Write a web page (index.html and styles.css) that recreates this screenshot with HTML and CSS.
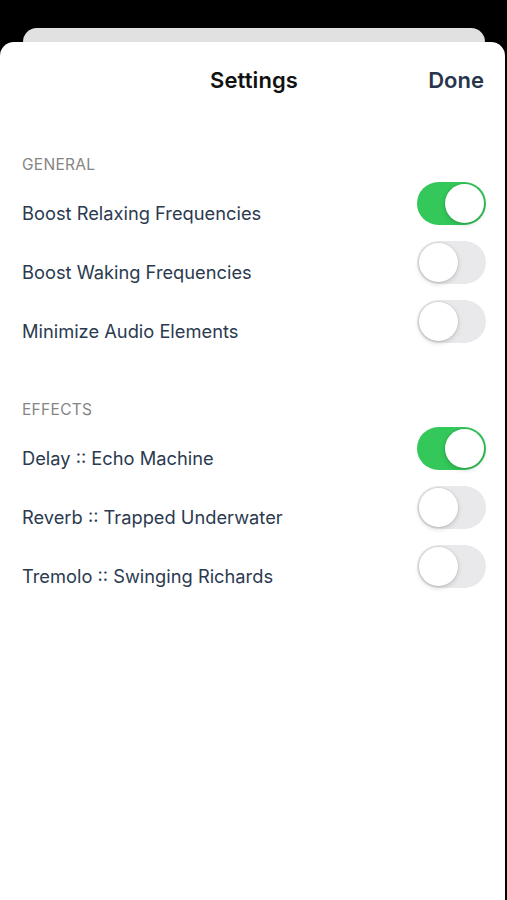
FILE: index.html
```html
<!DOCTYPE html>
<html lang="en">

<head>
    <meta charset="UTF-8">
    <title>Settings</title>
    <meta name="viewport" content="width=device-width,initial-scale=1">
    <link rel="stylesheet" href="styles.css">
</head>

<body>
    <div class="back-card"></div>
    <div class="sheet">
        <div class="header">
            <h1 class="title">Settings</h1>
            <span class="done">Done</span>
        </div>

        <div class="section">
            <div class="section-label">GENERAL</div>
            <div class="row">
                <span class="row-text">Boost Relaxing Frequencies</span>
                <span class="switch on"><span class="knob"></span></span>
            </div>
            <div class="row">
                <span class="row-text">Boost Waking Frequencies</span>
                <span class="switch"><span class="knob"></span></span>
            </div>
            <div class="row">
                <span class="row-text">Minimize Audio Elements</span>
                <span class="switch"><span class="knob"></span></span>
            </div>
        </div>

        <div class="section">
            <div class="section-label">EFFECTS</div>
            <div class="row">
                <span class="row-text">Delay :: Echo Machine</span>
                <span class="switch on"><span class="knob"></span></span>
            </div>
            <div class="row">
                <span class="row-text">Reverb :: Trapped Underwater</span>
                <span class="switch"><span class="knob"></span></span>
            </div>
            <div class="row">
                <span class="row-text">Tremolo :: Swinging Richards</span>
                <span class="switch"><span class="knob"></span></span>
            </div>
        </div>
    </div>
</body>

</html>
```

FILE: styles.css
```css
html,
body {
    height: 100%;
}

body {
    margin: 0;
    background: #000;
    font-family: Inter, 'Noto Sans', 'Liberation Sans', sans-serif;
    padding-top: 28px;
    box-sizing: border-box;
    overflow: hidden;
}

.back-card {
    height: 40px;
    margin: 0 22px 0 23px;
    background: #e1e1e1;
    border-radius: 14px 14px 0 0;
}

.sheet {
    position: relative;
    margin-top: -26px;
    margin-right: 2px;
    min-height: 900px;
    background: #fff;
    border-radius: 14px 14px 0 0;
    padding: 0 19px 0 22px;
}

.header {
    height: 76px;
    display: flex;
    align-items: center;
    justify-content: center;
    position: relative;
}

.title {
    margin: 0;
    font-size: 22px;
    font-weight: 600;
    color: #111;
    letter-spacing: 0.1px;
}

.done {
    position: absolute;
    right: 2px;
    font-size: 22px;
    font-weight: 600;
    color: #27364b;
}

.section {
    padding-top: 37px;
}

.section + .section {
    padding-top: 39.5px;
}

.section-label {
    font-size: 15.5px;
    line-height: 20px;
    color: #858585;
    margin-bottom: 8.5px;
    letter-spacing: 0.3px;
}

.row {
    height: 59px;
    display: flex;
    align-items: center;
    justify-content: space-between;
}

.row-text {
    font-size: 18.3px;
    color: #2b3a4f;
}

.switch {
    width: 69px;
    height: 43px;
    margin-bottom: 19px;
    border-radius: 22px;
    background: #e9e9eb;
    position: relative;
    flex-shrink: 0;
}

.switch.on {
    background: #34c759;
}

.knob {
    position: absolute;
    top: 2px;
    left: 2px;
    width: 39px;
    height: 39px;
    border-radius: 50%;
    background: #fff;
    box-shadow: 0 2px 5px rgba(0, 0, 0, 0.16), 0 0 0 1px rgba(0, 0, 0, 0.05);
}

.switch.on .knob {
    left: 28px;
}
```
